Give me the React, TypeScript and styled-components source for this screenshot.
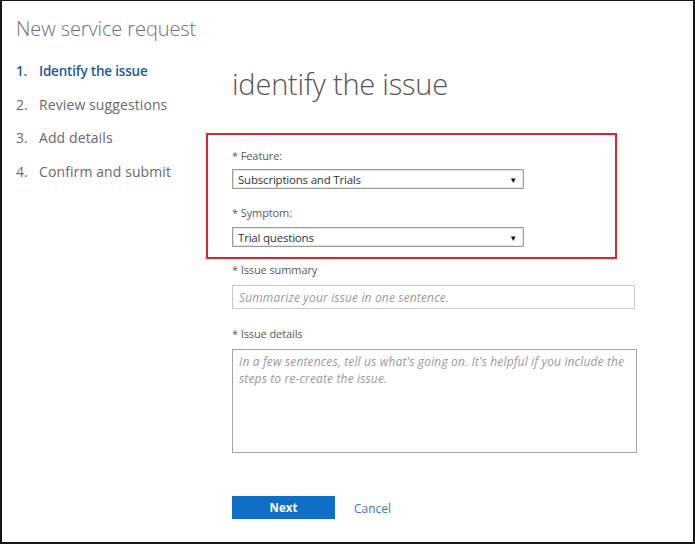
import React from 'react';
import styled, { createGlobalStyle } from 'styled-components';

const GlobalStyle = createGlobalStyle`
  html, body {
    margin: 0;
    padding: 0;
    background: #fff;
  }
  body {
    font-family: "Open Sans", "Noto Sans", "Liberation Sans", sans-serif;
  }
`;

const Frame = styled.div`
  box-sizing: border-box;
  width: 695px;
  height: 544px;
  border: 2px solid #161616;
  border-top-width: 1px;
  padding: 15px 0 0 14px;
  background: #fff;
`;

const Title = styled.h1`
  margin: 0;
  font-size: 20px;
  line-height: 26px;
  font-weight: 300;
  color: #6f6f6f;
  letter-spacing: -0.1px;
`;

const Body = styled.div`
  display: flex;
  margin-top: 12px;
`;

const Steps = styled.ol`
  list-style: none;
  margin: 0;
  padding: 0;
  width: 190px;
`;

const Step = styled.li<{ $active?: boolean }>`
  display: flex;
  height: 33.5px;
  align-items: center;
  font-size: ${p => (p.$active ? 13.5 : 14)}px;
  color: ${p => (p.$active ? '#1b5b98' : '#6a6a6a')};
  font-weight: ${p => (p.$active ? 600 : 400)};
  letter-spacing: ${p => (p.$active ? -0.2 : 0.1)}px;
`;

const StepNum = styled.span`
  width: 23px;
  flex: none;
`;

const Main = styled.div`
  display: flex;
  flex-direction: column;
  width: 432px;
`;

const Heading = styled.h2`
  margin: 12px 0 0 26px;
  font-size: 29px;
  line-height: 36px;
  font-weight: 300;
  color: #555;
  letter-spacing: -0.2px;
`;

const Highlight = styled.div`
  margin-top: 31px;
  width: 411px;
  box-sizing: border-box;
  border: 2px solid #e3212b;
  padding: 13px 0 10px 24px;
`;

const Field = styled.div<{ $top?: number; $gap?: number }>`
  display: flex;
  flex-direction: column;
  gap: ${p => p.$gap ?? 6}px;
  margin-top: ${p => p.$top ?? 0}px;
`;

const Indented = styled.div`
  padding-left: 26px;
  display: flex;
  flex-direction: column;
`;

const Label = styled.label`
  font-size: 11px;
  line-height: 16px;
  color: #5a5a5a;
  letter-spacing: -0.1px;
`;

const SelectBox = styled.div`
  box-sizing: border-box;
  width: 292px;
  height: 20px;
  border: 1px solid #9c9c9c;
  box-shadow: inset 0 0 0 1px #e6e6e6;
  display: flex;
  align-items: center;
  justify-content: space-between;
  padding: 0 6px 0 5px;
  font-size: 11.5px;
  color: #333;
  letter-spacing: -0.2px;
`;

const Arrow = styled.span`
  font-size: 8px;
  color: #111;
`;

const TextInput = styled.div<{ $width: number; $height: number; $border: string }>`
  box-sizing: border-box;
  width: ${p => p.$width}px;
  height: ${p => p.$height}px;
  border: 1px solid ${p => p.$border};
  padding: 3px 6px;
  font-size: 12px;
  line-height: 17px;
  font-style: italic;
  color: #9a9a9a;
  letter-spacing: 0.15px;
`;

const Actions = styled.div`
  display: flex;
  align-items: center;
  gap: 19px;
  margin-top: 43px;
`;

const NextButton = styled.button`
  width: 103px;
  height: 23px;
  border: none;
  background: #0f6fc6;
  color: #fff;
  font-family: inherit;
  font-size: 11.5px;
  font-weight: 700;
  padding: 0;
`;

const CancelLink = styled.a`
  font-size: 12px;
  color: #3a77b6;
  text-decoration: none;
  margin-top: 2px;
`;

const steps = ['Identify the issue', 'Review suggestions', 'Add details', 'Confirm and submit'];

export default function App() {
  return (
    <>
      <GlobalStyle />
      <Frame>
        <Title>New service request</Title>
        <Body>
          <Steps>
            {steps.map((s, i) => (
              <Step key={s} $active={i === 0}>
                <StepNum>{i + 1}.</StepNum>
                {s}
              </Step>
            ))}
          </Steps>
          <Main>
            <Heading>identify the issue</Heading>
            <Highlight>
              <Field $gap={5}>
                <Label>* Feature:</Label>
                <SelectBox>
                  Subscriptions and Trials
                  <Arrow>▼</Arrow>
                </SelectBox>
              </Field>
              <Field $top={16}>
                <Label>* Symptom:</Label>
                <SelectBox>
                  Trial questions
                  <Arrow>▼</Arrow>
                </SelectBox>
              </Field>
            </Highlight>
            <Indented>
              <Field $top={3} $gap={7}>
                <Label>* Issue summary</Label>
                <TextInput $width={403} $height={24} $border="#c9c9c9">
                  Summarize your issue in one sentence.
                </TextInput>
              </Field>
              <Field $top={17} $gap={7}>
                <Label>* Issue details</Label>
                <TextInput $width={405} $height={104} $border="#a3a3a3">
                  In a few sentences, tell us what's going on. It's helpful if you include the steps to re-create the issue.
                </TextInput>
              </Field>
              <Actions>
                <NextButton>Next</NextButton>
                <CancelLink href="#">Cancel</CancelLink>
              </Actions>
            </Indented>
          </Main>
        </Body>
      </Frame>
    </>
  );
}
